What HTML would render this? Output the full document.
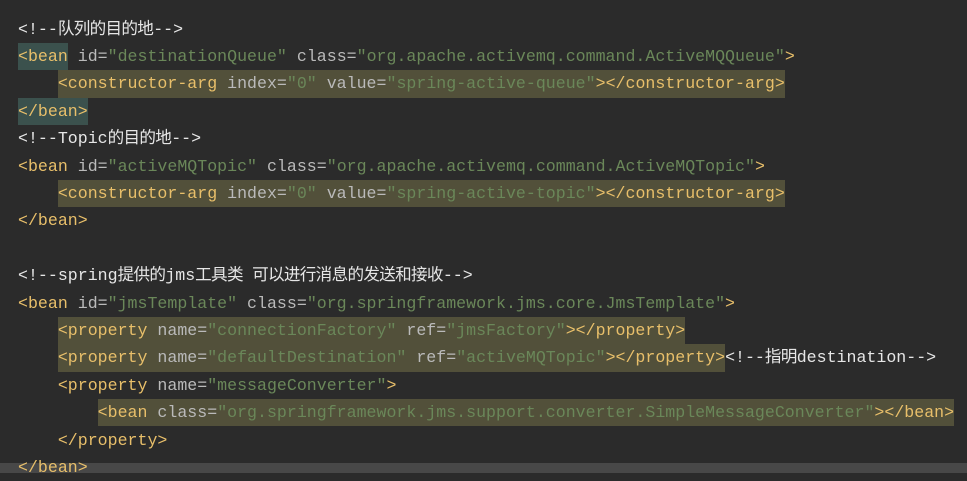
<!DOCTYPE html>
<html><head><meta charset="utf-8"><style>
body{margin:0;width:967px;height:478px;background:#2b2b2b;overflow:hidden;position:relative;font-family:"Liberation Mono","Noto Sans CJK SC",monospace;font-size:16.6px;}
.l{position:absolute;left:18px;height:27.4px;line-height:27.4px;white-space:pre;color:#bababa}
.t{color:#e8bf6a}.a{color:#bababa}.v{color:#6a8759}.c{color:#e6e6e6}
.k{letter-spacing:-0.7px}
.h{background:#52503a;display:inline-block;height:27.4px}.b{background:#3b514d;display:inline-block;height:27.4px}
.cur{position:absolute;left:0;top:463px;width:967px;height:10px;background:#484848}
</style></head><body>
<div class="cur"></div>
<div class="l" style="top:15.5px"><span class="c">&lt;!--<span class="k">队列的目的地</span>--&gt;</span></div>
<div class="l" style="top:42.9px"><span class="t b">&lt;bean</span> <span class="a">id=</span><span class="v">"destinationQueue"</span> <span class="a">class=</span><span class="v">"org.apache.activemq.command.ActiveMQQueue"</span><span class="t">&gt;</span></div>
<div class="l" style="top:70.3px">    <span class="h"><span class="t">&lt;constructor-arg</span> index=<span class="v">"0"</span> value=<span class="v">"spring-active-queue"</span><span class="t">&gt;&lt;/constructor-arg&gt;</span></span></div>
<div class="l" style="top:97.7px"><span class="t b">&lt;/bean&gt;</span></div>
<div class="l" style="top:125.1px"><span class="c">&lt;!--Topic<span class="k">的目的地</span>--&gt;</span></div>
<div class="l" style="top:152.5px"><span class="t">&lt;bean</span> id=<span class="v">"activeMQTopic"</span> class=<span class="v">"org.apache.activemq.command.ActiveMQTopic"</span><span class="t">&gt;</span></div>
<div class="l" style="top:179.9px">    <span class="h"><span class="t">&lt;constructor-arg</span> index=<span class="v">"0"</span> value=<span class="v">"spring-active-topic"</span><span class="t">&gt;&lt;/constructor-arg&gt;</span></span></div>
<div class="l" style="top:207.3px"><span class="t">&lt;/bean&gt;</span></div>
<div class="l" style="top:262.1px"><span class="c">&lt;!--spring<span class="k">提供的</span>jms<span class="k">工具类 可以进行消息的发送和接收</span>--&gt;</span></div>
<div class="l" style="top:289.5px"><span class="t">&lt;bean</span> id=<span class="v">"jmsTemplate"</span> class=<span class="v">"org.springframework.jms.core.JmsTemplate"</span><span class="t">&gt;</span></div>
<div class="l" style="top:316.9px">    <span class="h"><span class="t">&lt;property</span> name=<span class="v">"connectionFactory"</span> ref=<span class="v">"jmsFactory"</span><span class="t">&gt;&lt;/property&gt;</span></span></div>
<div class="l" style="top:344.3px">    <span class="h"><span class="t">&lt;property</span> name=<span class="v">"defaultDestination"</span> ref=<span class="v">"activeMQTopic"</span><span class="t">&gt;&lt;/property&gt;</span></span><span class="c">&lt;!--<span class="k">指明</span>destination--&gt;</span></div>
<div class="l" style="top:371.7px">    <span class="t">&lt;property</span> name=<span class="v">"messageConverter"</span><span class="t">&gt;</span></div>
<div class="l" style="top:399.1px">        <span class="h"><span class="t">&lt;bean</span> class=<span class="v">"org.springframework.jms.support.converter.SimpleMessageConverter"</span><span class="t">&gt;&lt;/bean&gt;</span></span></div>
<div class="l" style="top:426.5px">    <span class="t">&lt;/property&gt;</span></div>
<div class="l" style="top:453.9px"><span class="t">&lt;/bean&gt;</span></div>
</body></html>
